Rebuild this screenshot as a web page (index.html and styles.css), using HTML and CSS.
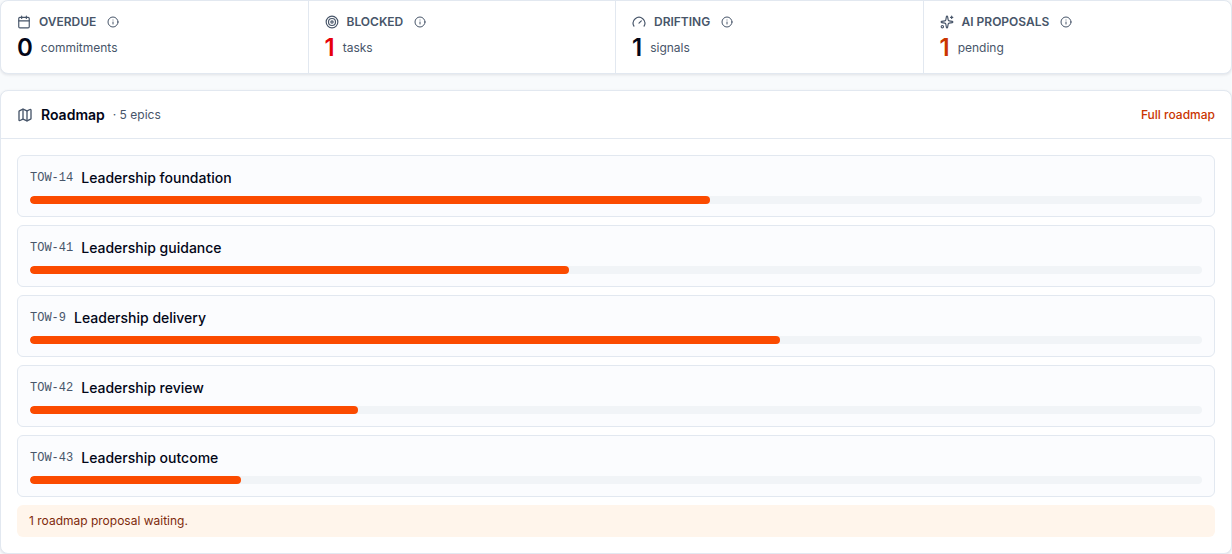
FILE: index.html
```html
<!DOCTYPE html>
<html lang="en">
<head>
    <meta charset="UTF-8">
    <meta name="viewport" content="width=device-width, initial-scale=1.0">
    <title>Roadmap</title>
    <link rel="stylesheet" href="styles.css">
</head>
<body>
    <!-- Shared icon -->
    <svg class="sprite" aria-hidden="true">
        <symbol id="info" viewBox="0 0 24 24">
            <circle cx="12" cy="12" r="10"/>
            <path d="M12 16v-4M12 8h.01"/>
        </symbol>
    </svg>

    <main class="page">
        <section class="card metrics">
            <div class="metric">
                <div class="metric-head">
                    <svg class="icon" viewBox="0 0 24 24" aria-hidden="true"><path d="M8 2v4M16 2v4M3 10h18"/><rect width="18" height="18" x="3" y="4" rx="2"/></svg>
                    <h2 class="metric-label">OVERDUE</h2>
                    <button class="info-btn" type="button" aria-label="About overdue"><svg class="icon icon-info"><use href="#info"/></svg></button>
                </div>
                <p class="metric-body"><strong class="metric-value">0</strong><span>commitments</span></p>
            </div>
            <div class="metric">
                <div class="metric-head">
                    <svg class="icon" viewBox="0 0 24 24" aria-hidden="true"><circle cx="12" cy="12" r="10"/><circle cx="12" cy="12" r="6"/><circle cx="12" cy="12" r="2"/></svg>
                    <h2 class="metric-label">BLOCKED</h2>
                    <button class="info-btn" type="button" aria-label="About blocked"><svg class="icon icon-info"><use href="#info"/></svg></button>
                </div>
                <p class="metric-body"><strong class="metric-value red">1</strong><span>tasks</span></p>
            </div>
            <div class="metric">
                <div class="metric-head">
                    <svg class="icon" viewBox="0 0 24 24" aria-hidden="true"><path d="m12 14 4-4"/><path d="M3.34 19a10 10 0 1 1 17.32 0"/></svg>
                    <h2 class="metric-label">DRIFTING</h2>
                    <button class="info-btn" type="button" aria-label="About drifting"><svg class="icon icon-info"><use href="#info"/></svg></button>
                </div>
                <p class="metric-body"><strong class="metric-value">1</strong><span>signals</span></p>
            </div>
            <div class="metric">
                <div class="metric-head">
                    <svg class="icon" viewBox="0 0 24 24" aria-hidden="true"><path d="M11.017 2.814a1 1 0 0 1 1.966 0l1.051 5.558a2 2 0 0 0 1.594 1.594l5.558 1.051a1 1 0 0 1 0 1.966l-5.558 1.051a2 2 0 0 0-1.594 1.594l-1.051 5.558a1 1 0 0 1-1.966 0l-1.051-5.558a2 2 0 0 0-1.594-1.594l-5.558-1.051a1 1 0 0 1 0-1.966l5.558-1.051a2 2 0 0 0 1.594-1.594z"/><path d="M20 2v4M22 4h-4"/><circle cx="4" cy="20" r="2"/></svg>
                    <h2 class="metric-label">AI PROPOSALS</h2>
                    <button class="info-btn" type="button" aria-label="About AI proposals"><svg class="icon icon-info"><use href="#info"/></svg></button>
                </div>
                <p class="metric-body"><strong class="metric-value orange">1</strong><span>pending</span></p>
            </div>
        </section>

        <section class="card">
            <header class="roadmap-head">
                <svg class="icon icon-map" viewBox="0 0 24 24" aria-hidden="true"><path d="M14.106 5.553a2 2 0 0 0 1.788 0l3.659-1.83A1 1 0 0 1 21 4.619v12.764a1 1 0 0 1-.553.894l-4.553 2.277a2 2 0 0 1-1.788 0l-4.212-2.106a2 2 0 0 0-1.788 0l-3.659 1.83A1 1 0 0 1 3 19.381V6.618a1 1 0 0 1 .553-.894l4.553-2.277a2 2 0 0 1 1.788 0z"/><path d="M15 5.764v15M9 3.236v15"/></svg>
                <h2 class="roadmap-title">Roadmap</h2>
                <span class="roadmap-count">· 5 epics</span>
                <a class="roadmap-link" href="#">Full roadmap</a>
            </header>
            <div class="roadmap-body">
                <article class="epic">
                    <div class="epic-head"><span class="epic-key">TOW-14</span><h3 class="epic-name">Leadership foundation</h3></div>
                    <div class="track" role="progressbar" aria-label="Leadership foundation" aria-valuenow="58"><div class="fill" style="width: 58%"></div></div>
                </article>
                <article class="epic">
                    <div class="epic-head"><span class="epic-key">TOW-41</span><h3 class="epic-name">Leadership guidance</h3></div>
                    <div class="track" role="progressbar" aria-label="Leadership guidance" aria-valuenow="46"><div class="fill" style="width: 46%"></div></div>
                </article>
                <article class="epic">
                    <div class="epic-head"><span class="epic-key">TOW-9</span><h3 class="epic-name">Leadership delivery</h3></div>
                    <div class="track" role="progressbar" aria-label="Leadership delivery" aria-valuenow="64"><div class="fill" style="width: 64%"></div></div>
                </article>
                <article class="epic">
                    <div class="epic-head"><span class="epic-key">TOW-42</span><h3 class="epic-name">Leadership review</h3></div>
                    <div class="track" role="progressbar" aria-label="Leadership review" aria-valuenow="28"><div class="fill" style="width: 28%"></div></div>
                </article>
                <article class="epic">
                    <div class="epic-head"><span class="epic-key">TOW-43</span><h3 class="epic-name">Leadership outcome</h3></div>
                    <div class="track" role="progressbar" aria-label="Leadership outcome" aria-valuenow="18"><div class="fill" style="width: 18%"></div></div>
                </article>
                <p class="notice">1 roadmap proposal waiting.</p>
            </div>
        </section>
    </main>
</body>
</html>
```
FILE: styles.css
```css
* {
    margin: 0;
    padding: 0;
    box-sizing: border-box;
}
body {
    background: #f8fafc;
    color: #020617;
    font-family: Inter, "Liberation Sans", sans-serif;
    font-size: 12px;
    line-height: 16px;
}
.sprite {
    display: none;
}
.page {
    display: flex;
    flex-direction: column;
    gap: 16px;
}
.card {
    background: #fff;
    border: 1px solid #e2e8f0;
    border-radius: 8px;
    box-shadow: 0 1px 3px rgba(15, 23, 42, 0.1);
}
.icon {
    width: 14px;
    height: 14px;
    flex-shrink: 0;
    fill: none;
    stroke: #475569;
    stroke-width: 2;
    stroke-linecap: round;
    stroke-linejoin: round;
}
.icon-info {
    width: 12px;
    height: 12px;
    display: block;
}
.icon-map {
    width: 16px;
    height: 16px;
}

/* Metrics */
.metrics {
    display: grid;
    grid-template-columns: repeat(4, 1fr);
}
.metric {
    padding: 12px 16px 8px;
    border-right: 1px solid #e2e8f0;
}
.metric:last-child {
    border-right: none;
}
.metric-head {
    display: flex;
    align-items: center;
    gap: 8px;
    height: 18px;
}
.metric-label {
    color: #475569;
    font-size: 12px;
    font-weight: 600;
}
.info-btn {
    border: none;
    background: none;
    padding: 0 3px;
    cursor: pointer;
}
.metric-body {
    display: flex;
    align-items: center;
    gap: 8px;
    color: #475569;
}
.metric-value {
    color: #020617;
    font-size: 24px;
    font-weight: 600;
    line-height: 34px;
}
.red {
    color: #e7000b;
}
.orange {
    color: #ca3500;
}

/* Roadmap */
.roadmap-head {
    display: flex;
    align-items: center;
    gap: 8px;
    height: 48px;
    padding: 0 16px;
    border-bottom: 1px solid #e2e8f0;
}
.roadmap-title {
    font-size: 14px;
    font-weight: 600;
}
.roadmap-count {
    color: #475569;
}
.roadmap-link {
    margin-left: auto;
    color: #ca3500;
    font-weight: 500;
    text-decoration: none;
}
.roadmap-body {
    display: flex;
    flex-direction: column;
    gap: 8px;
    padding: 16px;
}
.epic {
    padding: 12px;
    border: 1px solid #e2e8f0;
    border-radius: 6px;
    background: #fbfcfe;
}
.epic-head {
    display: flex;
    align-items: center;
    gap: 8px;
    margin-bottom: 8px;
    line-height: 20px;
}
.epic-key {
    color: #475569;
    font-family: "Liberation Mono", monospace;
    font-size: 12px;
}
.epic-name {
    font-size: 14px;
    font-weight: 500;
}
.track {
    height: 8px;
    border-radius: 4px;
    background: #f1f4f7;
    overflow: hidden;
}
.fill {
    height: 100%;
    border-radius: 4px;
    background: #fb4b00;
}
.notice {
    padding: 8px 12px;
    border-radius: 6px;
    background: #fff5eb;
    color: #7e2a0c;
}
```
